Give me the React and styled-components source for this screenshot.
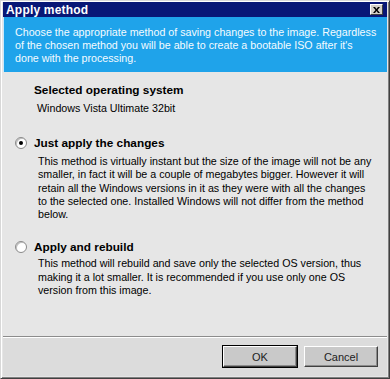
import React, { useState } from 'react';
import styled, { createGlobalStyle } from 'styled-components';

const Global = createGlobalStyle`
  html, body { margin: 0; padding: 0; background: #e4e4e4; }
  body { font-family: "Liberation Sans", Arial, sans-serif; }
`;

const Window = styled.div`
  width: 390px;
  height: 379px;
  box-sizing: border-box;
  display: flex;
  flex-direction: column;
  background: #e6e6e6;
  border-top: 1px solid #d8d8d8;
  border-left: 1px solid #d8d8d8;
  border-right: 1px solid #404040;
  border-bottom: 1px solid #404040;
  box-shadow: inset 1px 1px 0 #ffffff, inset -1px -1px 0 #808080;
  padding: 1px 2px 2px 2px;
`;

const TitleBar = styled.div`
  height: 15px;
  flex: none;
  background: #081776;
  color: #ffffff;
  display: flex;
  align-items: center;
  justify-content: space-between;
  padding: 0 4px 0 3px;
  font-weight: bold;
  font-size: 12px;
  letter-spacing: 0.2px;
`;

const CloseBox = styled.div`
  width: 13px;
  height: 11px;
  box-sizing: border-box;
  background: #d4d0c8;
  border-top: 1px solid #ffffff;
  border-left: 1px solid #ffffff;
  border-right: 1px solid #404040;
  border-bottom: 1px solid #404040;
  display: flex;
  align-items: center;
  justify-content: center;
`;

const Banner = styled.div`
  flex: none;
  background: #1fa3ea;
  color: #f4fbff;
  font-size: 10.7px;
  line-height: 13px;
  padding: 9px 8px 7px 11px;
  border-left: 1px solid #c8e8fa;
`;

const Line = styled.div`
  white-space: nowrap;
`;

const Body = styled.div`
  flex: 1;
  display: flex;
  flex-direction: column;
  padding: 11px 0 0 0;
`;

const Heading = styled.div`
  font-weight: bold;
  font-size: 11.8px;
  line-height: 14px;
  color: #000;
  padding-left: ${p => p.$indent}px;
  display: flex;
  align-items: center;
  gap: 7px;
`;

const Text = styled.div`
  font-size: 10.7px;
  line-height: ${p => p.$lh || 13.3}px;
  color: #000;
  padding-left: ${p => p.$indent}px;
  margin-top: ${p => p.$top || 0}px;
`;

const Radio = styled.span`
  width: 12px;
  height: 12px;
  box-sizing: border-box;
  border-radius: 50%;
  background: #ffffff;
  border: 1px solid #8a8a8a;
  box-shadow: inset 1px 1px 0 #c0c0c0;
  display: inline-flex;
  align-items: center;
  justify-content: center;
  flex: none;
  cursor: pointer;
  &::after {
    content: '';
    width: 4px;
    height: 4px;
    border-radius: 50%;
    background: ${p => (p.$on ? '#000' : 'transparent')};
  }
`;

const Option = styled.div`
  margin-top: ${p => p.$top}px;
`;

const Footer = styled.div`
  flex: none;
  height: 40px;
  box-sizing: border-box;
  border-top: 1px solid #8c8c8c;
  box-shadow: inset 0 1px 0 #ffffff;
  background: #dcdcdc;
  display: flex;
  justify-content: flex-end;
  align-items: flex-start;
  gap: 7px;
  padding: 9px 9px 0 0;
`;

const Button = styled.button`
  width: 74px;
  height: 21px;
  box-sizing: border-box;
  font-family: "Liberation Sans", Arial, sans-serif;
  font-size: 11px;
  color: #222;
  background: #c9c9c9;
  padding: 0;
  border-top: 1px solid #ffffff;
  border-left: 1px solid #ffffff;
  border-right: 1px solid #404040;
  border-bottom: 1px solid #404040;
  box-shadow: inset -1px -1px 0 #8c8c8c;
  outline: ${p => (p.$default ? '1px solid #000' : 'none')};
  outline-offset: 0;
`;

const justLines = [
  'This method is virtually instant but the size of the image will not be any',
  'smaller, in fact it will be a couple of megabytes bigger. However it will',
  'retain all the Windows versions in it as they were with all the changes',
  'to the selected one. Installed Windows will not differ from the method',
  'below.',
];

const rebuildLines = [
  'This method will rebuild and save only the selected OS version, thus',
  'making it a lot smaller. It is recommended if you use only one OS',
  'version from this image.',
];

export default function App() {
  const [method, setMethod] = useState('apply');

  return (
    <>
      <Global />
      <Window>
        <TitleBar>
          <span>Apply method</span>
          <CloseBox>
            <svg width="7" height="6" viewBox="0 0 7 6">
              <path d="M0 0h2l1.5 2L5 0h2L4.5 3 7 6H5L3.5 4 2 6H0l2.5-3z" fill="#000" />
            </svg>
          </CloseBox>
        </TitleBar>
        <Banner>
          <Line>Choose the appropriate method of saving changes to the image. Regardless</Line>
          <Line>of the chosen method you will be able to create a bootable ISO after it's</Line>
          <Line>done with the processing.</Line>
        </Banner>
        <Body>
          <Heading $indent={31}>Selected operating system</Heading>
          <Text $indent={34} $top={4} $lh={14}>Windows Vista Ultimate 32bit</Text>

          <Option $top={21}>
            <Heading $indent={12} onClick={() => setMethod('apply')}>
              <Radio $on={method === 'apply'} />
              Just apply the changes
            </Heading>
            <Text $indent={35} $top={5}>
              {justLines.map((l, i) => <Line key={i}>{l}</Line>)}
            </Text>
          </Option>

          <Option $top={19}>
            <Heading $indent={12} onClick={() => setMethod('rebuild')}>
              <Radio $on={method === 'rebuild'} />
              Apply and rebuild
            </Heading>
            <Text $indent={35} $top={3}>
              {rebuildLines.map((l, i) => <Line key={i}>{l}</Line>)}
            </Text>
          </Option>
        </Body>
        <Footer>
          <Button $default>OK</Button>
          <Button>Cancel</Button>
        </Footer>
      </Window>
    </>
  );
}
